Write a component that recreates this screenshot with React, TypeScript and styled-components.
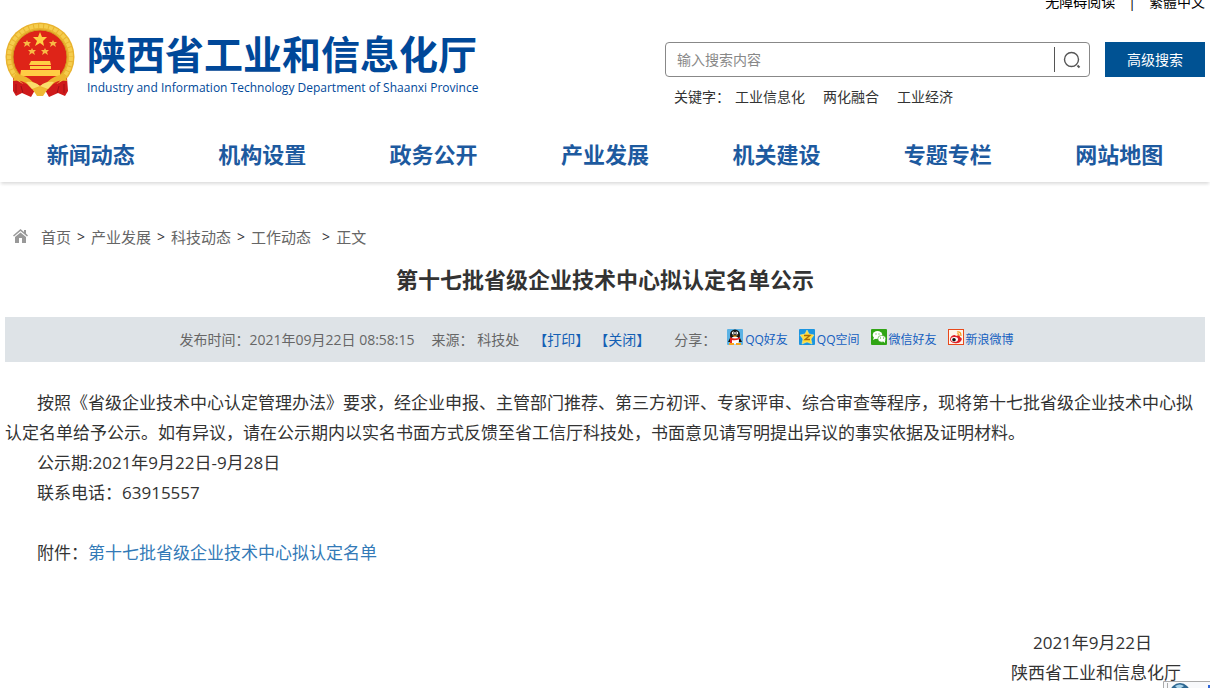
import React from "react";
import styled, { createGlobalStyle } from "styled-components";

const GlobalStyle = createGlobalStyle`
  * { box-sizing: border-box; }
  body {
    margin: 0;
    background: #fff;
    color: #333;
    font-family: "Open Sans", "Noto Sans CJK SC", sans-serif;
    font-size: 14px;
    overflow: hidden;
  }
  a { color: inherit; text-decoration: none; }
  p, h1 { margin: 0; }
`;

const Header = styled.header`
  padding: 0 5px;
`;

const TopLinks = styled.div`
  display: flex;
  justify-content: flex-end;
  gap: 13px;
  margin-top: -8px;
  height: 20px;
  line-height: 20px;
  color: #000;
`;

const Banner = styled.div`
  display: flex;
  justify-content: space-between;
  align-items: flex-start;
  height: 118px;
`;

const Logo = styled.a`
  display: flex;
  gap: 11px;
  padding-top: 10px;
  color: #004899;
`;

const LogoText = styled.span`
  display: flex;
  flex-direction: column;
  white-space: nowrap;
  padding-top: 8px;
`;

const LogoName = styled.strong`
  font-size: 39px;
  line-height: 48px;
`;

const LogoEnglish = styled.span`
  font-size: 12px;
  line-height: 20px;
`;

const SearchArea = styled.div`
  width: 45%;
  padding-top: 30px;
`;

const SearchRow = styled.form`
  display: flex;
  gap: 15px;
`;

const SearchBox = styled.div`
  flex: 1;
  display: flex;
  align-items: center;
  height: 35px;
  border: 1px solid #888;
  border-radius: 4px;
`;

const SearchInput = styled.input`
  flex: 1;
  min-width: 0;
  height: 25px;
  padding: 0 11px;
  border: 0;
  border-right: 1px solid #555;
  outline: 0;
  background: none;
  font: inherit;
  &::placeholder { color: #888; opacity: 1; }
`;

const IconButton = styled.button`
  display: flex;
  justify-content: center;
  width: 34px;
  padding: 0;
  border: 0;
  background: none;
`;

const AdvancedButton = styled.button`
  width: 100px;
  height: 35px;
  padding: 0 0 2px;
  border: 0;
  background: #005293;
  color: #fff;
  font: inherit;
`;

const Keywords = styled.div`
  display: flex;
  gap: 18px;
  padding: 10px 9px 0;
  line-height: 20px;
`;

const KeywordLabel = styled.span`
  margin-right: -13px;
`;

const Nav = styled.nav`
  display: flex;
  height: 52px;
  padding: 0 5px;
  box-shadow: 0 3px 3px -1px #ddd;
`;

const NavLink = styled.a`
  flex: 1;
  text-align: center;
  color: #1d5a9f;
  font-size: 22px;
  font-weight: 700;
  line-height: 48px;
`;

const Main = styled.main`
  padding: 42px 5px 0;
`;

const Breadcrumb = styled.nav`
  display: flex;
  align-items: center;
  gap: 6px;
  padding-left: 7px;
  height: 24px;
  font-size: 15px;
  color: #666;
`;

const HomeIcon = styled.svg`
  margin-right: 6px;
`;

const Arrow = styled.span<{ $last: boolean }>`
  margin-left: ${(p) => (p.$last ? 5 : 0)}px;
  font-size: 14px;
  color: #333;
`;

const Title = styled.h1`
  padding: 15px 0 22px;
  text-align: center;
  font-size: 22px;
  line-height: 32px;
`;

const Meta = styled.div`
  display: flex;
  justify-content: center;
  align-items: center;
  height: 45px;
  padding: 0 17px 2px 0;
  background: #dee3e7;
  color: #666;
  white-space: nowrap;
`;

const Source = styled.span`
  margin: 0 14px 0 17px;
`;

const MetaButton = styled.button`
  padding: 0;
  border: 0;
  background: none;
  color: #1360b5;
  font: inherit;
  & + & { margin-left: 5px; }
`;

const Share = styled.div`
  display: flex;
  align-items: center;
  gap: 11px;
  margin-left: 24px;
`;

const ShareLink = styled.a`
  display: flex;
  align-items: center;
  gap: 2px;
  color: #1560c0;
  font-size: 12px;
  svg { margin-bottom: 3px; }
`;

const Article = styled.article`
  padding-top: 26px;
  font-size: 17px;
  line-height: 30px;
`;

const Paragraph = styled.p`
  min-height: 30px;
  text-indent: 32px;
`;

const AttachmentLink = styled.a`
  color: #337ab7;
`;

const Signature = styled.p<{ $inset: number }>`
  padding-right: ${(p) => p.$inset}px;
  text-align: right;
`;

const Widget = styled.div`
  position: fixed;
  right: 0;
  bottom: 0;
  svg { display: block; }
`;

const Emblem = () => (
  <svg width="71" height="76" viewBox="0 0 71 76" aria-hidden="true">
    <circle cx="35" cy="35" r="34.500" fill="#e9b32f" />
    <circle cx="35" cy="35" r="31" fill="none" stroke="#f5cd4d" strokeWidth="4" strokeDasharray="4 1" />
    <circle cx="35" cy="35" r="27" fill="#de2418" stroke="#d39b22" />
    <path d="m35 10 2 5h5l-4 4 1 5-4-3-5 3 2-5-4-4h5z" fill="#ffcf45" />
    <path id="star" d="m22 18 1 2h3l-2 2 1 3-3-2-3 2 1-3-2-2h3z" fill="#f7ba45" />
    <use href="#star" x="26" />
    <use href="#star" x="5" y="8" />
    <use href="#star" x="18" y="8" />
    <path d="M26 39h19l1 4H24zM25 44h21v3H25zM16 48h39v6H15z" fill="#ffcc44" />
    <path d="M11 55h48l-7 7H18z" fill="#d9261a" />
    <path d="M8 56v13l3 5 6-3 9 4 4-7h10l4 7 9-4 7 3 3-5-1-13-10 6H18z" fill="#cf1a1b" />
    <path d="M10 52q12 1 19 9l6 3 6-3q8-8 19-9l2 7q-9-2-14 3l-7 7-6-3-6 3-7-7q-6-5-14-3z" fill="#edb52f" />
    <path d="M21 60q8-1 14 4 6-5 14-4l-6 7-8-3-8 3z" fill="#fadd6b" />
    <path d="m28 68 7-3 7 3-4 6h-6z" fill="#efb934" />
    <path d="M11 62v9M16 64l2 7M59 62v9M54 64l-2 7" stroke="#9f1014" />
  </svg>
);

const QQIcon = () => (
  <svg width="16" height="16" viewBox="0 0 16 16" aria-hidden="true">
    <rect width="16" height="16" rx="1" fill="#5bb2e4" />
    <path d="M1 13 4 7h8l3 6z" fill="#111" />
    <ellipse cx="8" cy="6" rx="5" ry="5.500" fill="#151515" />
    <ellipse cx="8" cy="11.500" rx="4" ry="4" fill="#fff" />
    <circle cx="6.300" cy="4" r="1.500" fill="#fff" />
    <circle cx="9.700" cy="4" r="1.500" fill="#fff" />
    <path d="M6.500 3.500v1M9.500 3.500v1" stroke="#111" />
    <path d="M5 6.500h6L8 8z" fill="#f8ab16" />
    <path d="M3 8q5 3 10 0v2q-5 2-8 1v3H3z" fill="#e52320" />
    <path d="M2 14h5v2H2zM9 14h5v2H9z" fill="#f7a51b" />
  </svg>
);

const QzoneIcon = () => (
  <svg width="16" height="16" viewBox="0 0 16 16" aria-hidden="true">
    <rect width="16" height="16" rx="1" fill="#1b95e0" />
    <path d="m8 1 2 4 5 1-3 4 1 5-5-2-5 2 1-5-3-4 5-1z" fill="#ffdd3c" stroke="#fff3a0" strokeWidth=".5" />
    <path d="M5 6.500h6l-5 4h5" fill="none" stroke="#a76b08" strokeWidth="1.300" />
  </svg>
);

const WechatIcon = () => (
  <svg width="16" height="16" viewBox="0 0 16 16" aria-hidden="true">
    <rect width="16" height="16" rx="1" fill="#30a515" />
    <ellipse cx="6.500" cy="6" rx="4.800" ry="4" fill="#fff" />
    <path d="m3 8-1 3 4-2z" fill="#fff" />
    <ellipse cx="10.800" cy="9.800" rx="4" ry="3.400" fill="#fff" stroke="#30a515" strokeWidth=".6" />
    <path d="m12 12 2 2v-3z" fill="#fff" />
    <path d="M4.500 5h1M7.500 5h1M9 9h1M12 9h1" stroke="#30a515" />
  </svg>
);

const WeiboIcon = () => (
  <svg width="16" height="16" viewBox="0 0 16 16" aria-hidden="true">
    <rect x=".5" y=".5" width="15" height="15" fill="#fff5ec" stroke="#e8491b" />
    <path d="M2 10q1-4 5-4l1 1q4-2 4 1 3 1 1 4-2 3-7 2-4-1-4-4" fill="#df2027" />
    <ellipse cx="6.500" cy="10.500" rx="3.500" ry="2.400" fill="#fff" />
    <circle cx="6" cy="10.700" r="1.800" fill="#111" />
    <path d="M9 3q4-1 4 4M9 5q2-1 2 2" fill="none" stroke="#f49a1c" strokeWidth="1.200" />
  </svg>
);

const navItems = ["新闻动态", "机构设置", "政务公开", "产业发展", "机关建设", "专题专栏", "网站地图"];
const keywords = ["工业信息化", "两化融合", "工业经济"];
const crumbs = ["首页", "产业发展", "科技动态", "工作动态"];
const shares = [
  { label: "QQ好友", Icon: QQIcon },
  { label: "QQ空间", Icon: QzoneIcon },
  { label: "微信好友", Icon: WechatIcon },
  { label: "新浪微博", Icon: WeiboIcon },
];

export default function App() {
  return (
    <>
      <GlobalStyle />
      <Header>
        <TopLinks>
          <a href="#accessible">无障碍阅读</a>
          <span>|</span>
          <a href="#traditional">繁體中文</a>
        </TopLinks>
        <Banner>
          <Logo href="#home">
            <Emblem />
            <LogoText>
              <LogoName>陕西省工业和信息化厅</LogoName>
              <LogoEnglish>Industry and Information Technology Department of Shaanxi Province</LogoEnglish>
            </LogoText>
          </Logo>
          <SearchArea>
            <SearchRow onSubmit={(e) => e.preventDefault()}>
              <SearchBox>
                <SearchInput type="text" placeholder="输入搜索内容" aria-label="输入搜索内容" />
                <IconButton type="submit" aria-label="搜索">
                  <svg width="20" height="20" viewBox="0 0 20 20" fill="none" stroke="#555" strokeWidth="1.400">
                    <circle cx="9.500" cy="9.500" r="7" />
                    <path d="m15.500 15.500 2 2" strokeWidth="2" />
                  </svg>
                </IconButton>
              </SearchBox>
              <AdvancedButton type="button">高级搜索</AdvancedButton>
            </SearchRow>
            <Keywords>
              <KeywordLabel>关键字：</KeywordLabel>
              {keywords.map((k) => (
                <a href="#keyword" key={k}>{k}</a>
              ))}
            </Keywords>
          </SearchArea>
        </Banner>
      </Header>
      <Nav>
        {navItems.map((n) => (
          <NavLink href="#nav" key={n}>{n}</NavLink>
        ))}
      </Nav>
      <Main>
        <Breadcrumb>
          <HomeIcon width="17" height="16" viewBox="0 0 17 16" fill="#999" aria-hidden="true">
            <path d="M8.500 1 1 7.500l1 1 6.500-5.500L15 8.500l1-1-2-2V2h-2v2z" />
            <path d="m3 9 5.500-4.500L14 9v6h-4v-5H7v5H3z" />
          </HomeIcon>
          {crumbs.map((c, i) => (
            <React.Fragment key={c}>
              <a href="#crumb">{c}</a>
              <Arrow $last={i === crumbs.length - 1}>&gt;</Arrow>
            </React.Fragment>
          ))}
          <span>正文</span>
        </Breadcrumb>
        <Title>第十七批省级企业技术中心拟认定名单公示</Title>
        <Meta>
          <span>发布时间：2021年09月22日 08:58:15</span>
          <Source>来源： 科技处</Source>
          <MetaButton type="button">【打印】</MetaButton>
          <MetaButton type="button">【关闭】</MetaButton>
          <Share>
            <span>分享：</span>
            {shares.map(({ label, Icon }) => (
              <ShareLink href="#share" key={label}>
                <Icon />
                {label}
              </ShareLink>
            ))}
          </Share>
        </Meta>
        <Article>
          <Paragraph>
            按照《省级企业技术中心认定管理办法》要求，经企业申报、主管部门推荐、第三方初评、专家评审、综合审查等程序，现将第十七批省级企业技术中心拟认定名单给予公示。如有异议，请在公示期内以实名书面方式反馈至省工信厅科技处，书面意见请写明提出异议的事实依据及证明材料。
          </Paragraph>
          <Paragraph>公示期:2021年9月22日-9月28日</Paragraph>
          <Paragraph>联系电话：63915557</Paragraph>
          <Paragraph />
          <Paragraph>
            附件：<AttachmentLink href="#attachment">第十七批省级企业技术中心拟认定名单</AttachmentLink>
          </Paragraph>
          <Paragraph />
          <Paragraph />
          <Signature $inset={53}>2021年9月22日</Signature>
          <Signature $inset={24}>陕西省工业和信息化厅</Signature>
        </Article>
      </Main>
      <Widget>
        <svg width="47" height="7" viewBox="0 0 47 7" aria-hidden="true">
          <path d="M0 0h47v7H0z" fill="#f8f9fb" />
          <path d="M.5 7V.5H47M4.500 2v5" fill="none" stroke="#aaa" />
          <circle cx="17" cy="12" r="10" fill="#2d6791" />
          <path d="M12 5q5-3 9 0l-3 2h-4z" fill="#a9d3ea" />
          <path d="M45 4h2v3h-2z" fill="#2f66d8" />
        </svg>
      </Widget>
    </>
  );
}
